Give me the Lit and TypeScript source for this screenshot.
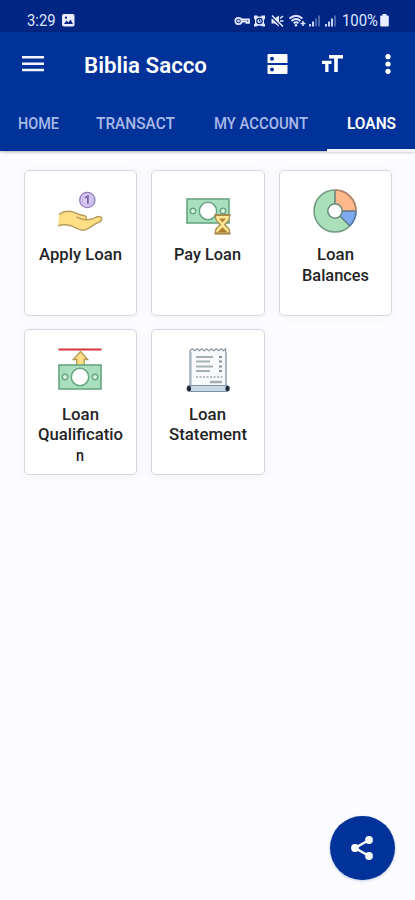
import { LitElement, html, svg, css, type SVGTemplateResult } from "lit";
import { customElement, property } from "lit/decorators.js";

/** One line of text, condensed or widened to a given width. */
@customElement("fit-text")
class FitText extends LitElement {
  @property() text = "";
  @property({ type: Number }) width = 40;
  @property({ type: Number }) height = 21;
  @property({ type: Number }) base = 16;
  static styles = css`
    :host { display: block; line-height: 0; }
    svg { display: block; overflow: visible; fill: currentColor; }
  `;
  render() {
    return html`<svg width=${this.width} height=${this.height}>
      <text x="0" y=${this.base} textLength=${this.width} lengthAdjust="spacingAndGlyphs">${this.text}</text>
    </svg>`;
  }
}

const note = (y: number) => svg`
  <rect x="1" y=${y} width="42" height="24" fill="#a9dfbd" stroke="#68a583" stroke-width="1.6"/>
  <circle cx="22" cy=${y + 12} r="8.7" fill="#fff" stroke="#68a583" stroke-width="1.5"/>
  <circle cx="7" cy=${y + 12} r="2.7" fill="#dcf5e5" stroke="#68a583" stroke-width="1.4"/>
  <circle cx="37" cy=${y + 12} r="2.7" fill="#dcf5e5" stroke="#68a583" stroke-width="1.4"/>`;

const art: Record<string, SVGTemplateResult> = {
  apply: svg`
    <circle cx="29.3" cy="11" r="7.6" fill="#d9c9f7" stroke="#8d7db8" stroke-width="1.4"/>
    <circle cx="29.3" cy="11" r="5" fill="none" stroke="#bba9e2" stroke-width=".8"/>
    <path d="M27 8.8l2.9-1.3v7.3" fill="none" stroke="#7565a0" stroke-width="1.8"/>
    <path d="M1 25.5c4-3 10-4 15-2.2 3.5 1.5 6 3 9.5 3.2 2.5.3 3.5 2 2.5 4.2 3.5.3 7-.7 9.5-2.200 2.500-1.500 6-1.300 6.300 1 .2 2-2 3.500-5 4.700-5 2.300-8.500 6.500-13.500 7-4.300.2-8-3.200-13-4.700-4-1-8-1.200-12.300.3z" fill="#ffdf86"/>
    <path d="M1 25.500c4-3 10-4 15-2.200 3.500 1.500 6 3 9.500 3.200 2.500.3 3.500 2 2.500 4.200 3.500.3 7-.7 9.500-2.200 2.500-1.500 6-1.300 6.300 1 .2 2-2 3.500-5 4.700-5 2.300-8.500 6.500-13.500 7-4.300.2-8-3.200-13-4.700-4-1-8-1.200-12.300.3M18.500 28.300c3 .3 4.500 2.500 9.500 2.400" fill="none" stroke="#b69a58" stroke-width="1.4"/>`,
  pay: svg`${note(10)}
    <path d="M29.500 26.200h14v2.500c0 3-2.800 4.600-4.800 6.800 2 2.200 4.800 3.500 4.800 6.500v2.500h-14v-2.500c0-3 2.800-4.300 4.800-6.500-2-2.200-4.800-3.800-4.800-6.800z" fill="#ffe695" stroke="#a78a4c" stroke-width="1.3"/>
    <path d="M28.500 26h16M28.500 44.500h16" stroke="#a78a4c" stroke-width="2"/>
    <path d="M33 29.500h7l-3.500 4zM31.500 43.200l5-5 5 5z" fill="#b27f32"/>`,
  balances: svg`
    <circle cx="22" cy="22" r="21" fill="#a9dfb9"/>
    <path d="M22 22V1a21 21 0 0 1 21 21z" fill="#ffb78c"/>
    <path d="M22 22h21a21 21 0 0 1-6.100 14.800z" fill="#7eaaf1"/>
    <path d="M22 1v14M29 22h14M27 27l9.900 9.900" stroke="#607a79" stroke-width="1.4"/>
    <circle cx="22" cy="22" r="21" fill="none" stroke="#719a83" stroke-width="1.5"/>
    <path d="M22 1a21 21 0 0 1 21 21" fill="none" stroke="#b98466" stroke-width="1.5"/>
    <path d="M43 22a21 21 0 0 1-6.100 14.800" fill="none" stroke="#5876b4" stroke-width="1.5"/>
    <circle cx="22" cy="22" r="7.2" fill="#fff" stroke="#668876" stroke-width="1.5"/>`,
  qualification: svg`
    <path d="M.5 1.500h43" stroke="#d8353b" stroke-width="2"/>
    <path d="M22.500 3.500l7.300 8h-3.600v6h-7.400v-6h-3.600z" fill="#ffe087" stroke="#b39a52" stroke-width="1.3"/>
    ${note(17)}`,
  statement: svg`
    <path d="M4 2.500l2.200-1.700 2.400 2 2.400-2 2.400 2 2.400-2 2.400 2 2.400-2 2.400 2 2.400-2 2.400 2 2.400-2 2.400 2 2.400-2 2.400 2 2.200-2V39H4z" fill="#f8fafc" stroke="#8796a5" stroke-width="1.2"/>
    <path d="M4.600 4v34M40 4v34" stroke="#aab9c6" stroke-width="2"/>
    <path d="M10 9h17M10 13.500h14M10 18.500h17M10 23h14" stroke="#a3b1b4" stroke-width="2"/>
    <path d="M33 9h3M33 13.500h3M33 18.500h3M33 23h3" stroke="#81909a" stroke-width="2"/>
    <path d="M10 29h27" stroke="#9ba7b0" stroke-width="1.4" stroke-dasharray="2 1.500"/>
    <path d="M24 34h12" stroke="#a3b1b4" stroke-width="2.5"/>
    <rect x="1" y="37.500" width="42" height="6" rx="2" fill="#c7d8e8" stroke="#7d8fa3" stroke-width="1"/>
    <rect x="1" y="38" width="4" height="5" rx="1.5" fill="#20283a"/>
    <rect x="39.500" y="38" width="4" height="5" rx="1.5" fill="#20283a"/>`,
};

const cards: { icon: string; lines: [string, number][] }[] = [
  { icon: "apply", lines: [["Apply Loan", 83]] },
  { icon: "pay", lines: [["Pay Loan", 67]] },
  { icon: "balances", lines: [["Loan", 37], ["Balances", 67]] },
  { icon: "qualification", lines: [["Loan", 37], ["Qualificatio", 85], ["n", 8]] },
  { icon: "statement", lines: [["Loan", 37], ["Statement", 78]] },
];

const tabs: [string, number][] = [["HOME", 41], ["TRANSACT", 79], ["MY ACCOUNT", 94], ["LOANS", 49]];

@customElement("app-root")
class AppRoot extends LitElement {
  static styles = css`
    :host {
      display: block; position: relative; width: 415px; height: 900px; overflow: hidden;
      background: #fcfcff; font-family: Roboto, "Noto Sans", sans-serif; color: #fff;
    }
    svg { display: block; }
    .status {
      box-sizing: border-box; height: 32px; padding: 10px 25px 0 27px; background: #002583;
      display: flex; align-items: flex-start; font-size: 16px; color: #dfe5ff;
    }
    .photo { margin: 4px 0 0 6.5px; }
    .signals { margin: 3px 0 0 auto; }
    .header { height: 119px; background: #003299; box-shadow: 0 1px 3px #0000004d; }
    .bar { height: 64px; display: flex; align-items: center; padding: 0 24px 0 21px; }
    .title { margin-left: 39px; margin-right: auto; font-size: 22px; font-weight: 600; }
    .server { margin-right: 34px; }
    .size { margin-right: 42px; }
    .tabs { height: 56px; display: grid; grid-template-columns: 76px 118px 133px 88px; }
    .tab {
      box-sizing: border-box; display: flex; justify-content: center; padding-top: 16px;
      font-size: 17px; font-weight: 500; color: #a9b9e8;
    }
    .active { color: #fff; font-weight: 600; border-bottom: 3px solid #f3f4fd; }
    .grid {
      display: grid; grid-template-columns: repeat(3, 113.5px); grid-auto-rows: 146px;
      gap: 13.5px 14px; padding: 18.5px 0 0 23.5px;
    }
    .card {
      box-sizing: border-box; border: 1.5px solid #d3d7de; border-radius: 5px; background: #fff;
      box-shadow: 0 1px 8px #5060a012; display: flex; flex-direction: column; align-items: center;
      padding-top: 18px; font-size: 16px; font-weight: 500; color: #242426;
    }
    .art { margin-bottom: 11.5px; overflow: visible; }
    .fab {
      position: absolute; right: 20.5px; bottom: 20px; width: 64.5px; height: 64.5px;
      border-radius: 50%; background: #003299; display: grid; place-items: center;
      box-shadow: 0 1px 3px #00329940;
    }
  `;

  render() {
    return html`
      <div class="status">
        <fit-text text="3:29" width="28.5" height="20" base="16.3"></fit-text>
        <svg class="photo" width="13" height="13" viewBox="0 0 13 13">
          <rect width="12.5" height="12.5" rx="1.8" fill="#e9edff"/>
          <path d="M2 10l2.500-3.500 2 2 2-3L11 10z" fill="#002583"/><circle cx="4" cy="3.700" r="1.1" fill="#002583"/>
        </svg>
        <svg class="signals" width="108" height="16" viewBox="0 0 108 16">
          <g fill="none" stroke="#e3e8ff" stroke-width="1.8">
            <circle cx="4.500" cy="8" r="3.200"/><circle cx="4.500" cy="8" r=".5"/><path d="M7.500 6.300H15v3.600h-2.500V8.500H7.500"/>
          </g>
          <path d="M20 2.500h3.500v1h4v-1H31v3.300l-1 1v3.400l1 1v2.300h-2.500l-1-.8h-4l-1 .8H20v-2.300l1-1V6.800l-1-1z" fill="#e3e8ff"/>
          <circle cx="25.500" cy="8" r="2.700" fill="none" stroke="#002583" stroke-width="1.2"/><path d="M25.500 6.200v2h1.500" fill="none" stroke="#002583" stroke-width=".9"/>
          <path d="M37.500 5.500h3l4.500-3v11l-4.500-3h-3z" fill="#e3e8ff"/>
          <path d="M37 3.500l10.500 10.500" stroke="#002583" stroke-width="1.2"/><path d="M38 2.500l11 11" stroke="#e3e8ff" stroke-width="1.6"/>
          <path d="M46 5.500l3-2.500M46 8h3.500" stroke="#e3e8ff" stroke-width="1.6"/>
          <g fill="none" stroke="#dfe5ff" stroke-width="1.8">
            <path d="M55.500 5.500q6.500-5.500 13 0M57.500 8q4.500-4 9 0M59.700 10.300q2.400-2 4.800 0"/>
            <path d="M66.500 10.500h5M69 8v5" stroke-width="1.5"/>
          </g>
          <circle cx="62" cy="12.3" r="1.3" fill="#dfe5ff"/>
          <path d="M75 11h2v2.500h-2zM78 8.500h2v5h-2zM91 11h2v2.500h-2zM94 8.500h2v5h-2zM97 5.500h2v8h-2z" fill="#c9d3fa"/>
          <path d="M81 5.500h2v8h-2zM84 2.500h2v11h-2zM100 2.500h2v11h-2z" fill="#4b65ab"/>
        </svg>
        <fit-text text="100%" width="36" height="20" base="16.3"></fit-text>
        <svg width="12" height="20" viewBox="0 0 12 20"><path d="M4.500 4h4v1.500h1.300q1 0 1 1v9q0 1-1 1H3.200q-1 0-1-1v-9q0-1 1-1h1.300z" fill="#e9edff"/></svg>
      </div>
      <div class="header">
        <div class="bar">
          <svg width="24" height="18" viewBox="0 0 24 18"><path d="M1 2.300h22M1 8.700h22M1 15.100h22" stroke="#f4f4ff" stroke-width="2.5"/></svg>
          <fit-text class="title" text="Biblia Sacco" width="123" height="28" base="23"></fit-text>
          <svg class="server" width="21" height="20" viewBox="0 0 21 20">
            <path d="M1.500 0h18q1 0 1 1v8H.500V1q0-1 1-1M.5 11h20v8q0 1-1 1h-18q-1 0-1-1z" fill="#fff"/>
            <circle cx="5" cy="4.700" r="2" fill="#003299"/><circle cx="5" cy="15.500" r="2" fill="#003299"/>
          </svg>
          <svg class="size" width="21" height="18" viewBox="0 0 21 18"><path d="M7 0h14v3.500h-5.200V17h-3.600V3.500H7zM0 5.700h9.500v3.200H6.500V17H3.200V8.900H0z" fill="#fff"/></svg>
          <svg width="6" height="20" viewBox="0 0 6 20"><g fill="#fff"><circle cx="3" cy="2.700" r="2.600"/><circle cx="3" cy="10" r="2.600"/><circle cx="3" cy="17.300" r="2.600"/></g></svg>
        </div>
        <div class="tabs">
          ${tabs.map(([label, w], i) => html`<div class="tab ${i === 3 ? "active" : ""}">
            <fit-text text=${label} width=${w} base="16.5"></fit-text></div>`)}
        </div>
      </div>
      <div class="grid">
        ${cards.map((c) => html`<div class="card">
          <svg class="art" width="44" height="44" viewBox="0 0 44 44">${art[c.icon]}</svg>
          ${c.lines.map(([t, w]) => html`<fit-text text=${t} width=${w} height="20.5" base="16"></fit-text>`)}
        </div>`)}
      </div>
      <div class="fab">
        <svg width="23" height="26" viewBox="0 0 23 26">
          <path d="M18 5L4 13l14 8" fill="none" stroke="#fff" stroke-width="2.5"/>
          <g fill="#fff"><circle cx="18" cy="5" r="3.900"/><circle cx="4" cy="13" r="3.900"/><circle cx="18" cy="21" r="3.900"/></g>
        </svg>
      </div>`;
  }
}
